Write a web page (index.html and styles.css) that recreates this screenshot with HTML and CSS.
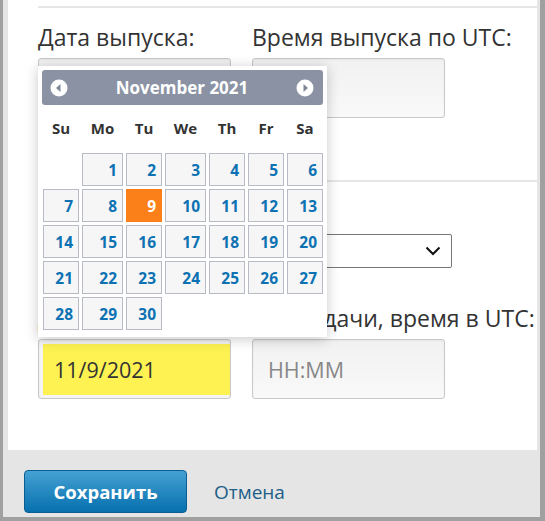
FILE: index.html
```html
<!DOCTYPE html>
<html lang="ru">
<head>
  <meta charset="UTF-8">
  <meta name="viewport" content="width=device-width, initial-scale=1.0">
  <title>Выпуск</title>
  <link rel="stylesheet" href="styles.css">
</head>
<body>
  <div class="modal">
    <div class="panel">
      <div class="sep"></div>
      <div class="row">
        <div class="field">
          <label>Дата выпуска:</label>
          <input class="text" type="text">
        </div>
        <div class="field">
          <label>Время выпуска по UTC:</label>
          <input class="text" type="text">
        </div>
      </div>
      <div class="sep"></div>
      <div class="row">
        <div class="field wide">
          <label>Часовой пояс:</label>
          <div class="select">
            <span></span>
            <svg width="16" height="10" viewBox="0 0 16 10"><path d="M1.5 1.5 L8 8 L14.5 1.5" fill="none" stroke="#111" stroke-width="2"/></svg>
          </div>
        </div>
      </div>
      <div class="row">
        <div class="field">
          <label>Дата сдачи:</label>
          <input class="text hl" type="text" value="11/9/2021">
        </div>
        <div class="field">
          <label>Срок сдачи, время в UTC:</label>
          <input class="text" type="text" placeholder="HH:MM">
        </div>
      </div>

      <!-- календарь поверх поля даты -->
      <div class="datepicker">
        <div class="dp-head">
          <span class="dp-btn"><svg width="18" height="18" viewBox="0 0 18 18"><circle cx="9" cy="9" r="8.5" fill="#fff"/><path d="M10.5 5 L6 9 L10.5 13 Z" fill="#7f8899"/></svg></span>
          <span class="dp-title">November 2021</span>
          <span class="dp-btn"><svg width="18" height="18" viewBox="0 0 18 18"><circle cx="9" cy="9" r="8.5" fill="#fff"/><path d="M7.5 5 L12 9 L7.5 13 Z" fill="#7f8899"/></svg></span>
        </div>
        <div class="dp-grid dp-days">
          <span>Su</span><span>Mo</span><span>Tu</span><span>We</span><span>Th</span><span>Fr</span><span>Sa</span>
        </div>
        <div class="dp-grid dp-dates">
          <span class="empty"></span><a>1</a><a>2</a><a>3</a><a>4</a><a>5</a><a>6</a>
          <a>7</a><a>8</a><a class="active">9</a><a>10</a><a>11</a><a>12</a><a>13</a>
          <a>14</a><a>15</a><a>16</a><a>17</a><a>18</a><a>19</a><a>20</a>
          <a>21</a><a>22</a><a>23</a><a>24</a><a>25</a><a>26</a><a>27</a>
          <a>28</a><a>29</a><a>30</a>
        </div>
      </div>
    </div>
    <div class="footer">
      <button class="btn-save">Сохранить</button>
      <a class="cancel" href="#">Отмена</a>
    </div>
  </div>
</body>
</html>
```

FILE: styles.css
```css
* {
  margin: 0;
  padding: 0;
  box-sizing: border-box;
}
body {
  width: 545px;
  height: 521px;
  overflow: hidden;
  background-color: #a0a0a0;
  font-family: "Open Sans", "Liberation Sans", sans-serif;
  color: #333;
}
.modal {
  margin-left: 3px;
  width: 537px;
  height: 517px;
  background-color: #e5e5e5;
}
.panel {
  position: relative;
  margin: 0 3px 0 5px;
  height: 450px;
  padding-top: 6px;
  background-color: #fff;
}
.sep {
  height: 2px;
  margin-left: 30px;
  background-color: #e6e6e6;
}
.row {
  display: flex;
  gap: 21px;
  padding-left: 30px;
  margin-top: 14px;
}
.row + .sep {
  margin-top: 62px;
}
.row + .row {
  margin-top: 35px;
}
.field {
  display: flex;
  flex-direction: column;
  width: 193px;
}
.field.wide {
  width: 414px;
}
.field label {
  font-size: 23px;
  line-height: 30px;
  margin-bottom: 6px;
  white-space: nowrap;
}
.text {
  width: 193px;
  height: 60px;
  border: 1px solid #c8c8c8;
  border-radius: 3px;
  background: linear-gradient(#f1f1f1, #f9f9f9);
  box-shadow: inset 0 1px 2px rgba(0, 0, 0, 0.05);
  padding: 0 15px;
  font-family: inherit;
  font-size: 21.5px;
  color: #333;
  outline: none;
}
.text::placeholder {
  color: #888;
}
.text.hl {
  background: #f4f4f4 linear-gradient(#fdf251, #fdf251) no-repeat;
  background-position: 4px 4px;
  background-size: calc(100% - 4px) calc(100% - 7px);
}
.select {
  display: flex;
  align-items: center;
  justify-content: flex-end;
  height: 34px;
  margin-top: 2px;
  border: 1px solid #767676;
  border-radius: 2px;
  padding-right: 10px;
}
.datepicker {
  position: absolute;
  left: 30px;
  top: 66px;
  width: 289px;
  height: 271px;
  padding: 4px;
  background-color: #fff;
  box-shadow: 0 2px 12px rgba(0, 0, 0, 0.22);
}
.dp-head {
  display: flex;
  align-items: center;
  justify-content: space-between;
  height: 35px;
  padding: 0 9px 0 8px;
  border-radius: 3px;
  background-color: #8a92a3;
}
.dp-btn {
  display: flex;
}
.dp-title {
  color: #fff;
  font-weight: bold;
  font-size: 17px;
}
.dp-grid {
  display: grid;
  grid-template-columns: 36px 41px 36px 41px 36px 36px 36px;
  column-gap: 3px;
  padding-left: 1px;
}
.dp-days {
  height: 48px;
  align-items: center;
  padding-bottom: 3px;
}
.dp-days span {
  text-align: center;
  font-weight: bold;
  font-size: 15px;
  color: #333;
}
.dp-dates {
  grid-auto-rows: 33px;
  row-gap: 3px;
}
.dp-dates a {
  display: flex;
  align-items: center;
  justify-content: flex-end;
  padding-right: 5px;
  border: 1px solid #b7bbc6;
  background-color: #f6f6f6;
  color: #0c72b3;
  font-weight: bold;
  font-size: 15.5px;
}
.dp-dates a.active {
  border-color: #fb8019;
  background-color: #fb8019;
  color: #fff;
}
.footer {
  display: flex;
  align-items: center;
  gap: 27px;
  padding: 20px 0 0 21px;
}
.btn-save {
  width: 163px;
  height: 43px;
  border: 1px solid #0b5e92;
  border-radius: 4px;
  background: linear-gradient(#46a1d3, #0670ae);
  color: #fff;
  font-family: inherit;
  font-weight: bold;
  font-size: 18.5px;
}
.cancel {
  color: #205d88;
  font-size: 19px;
  text-decoration: none;
}
```
